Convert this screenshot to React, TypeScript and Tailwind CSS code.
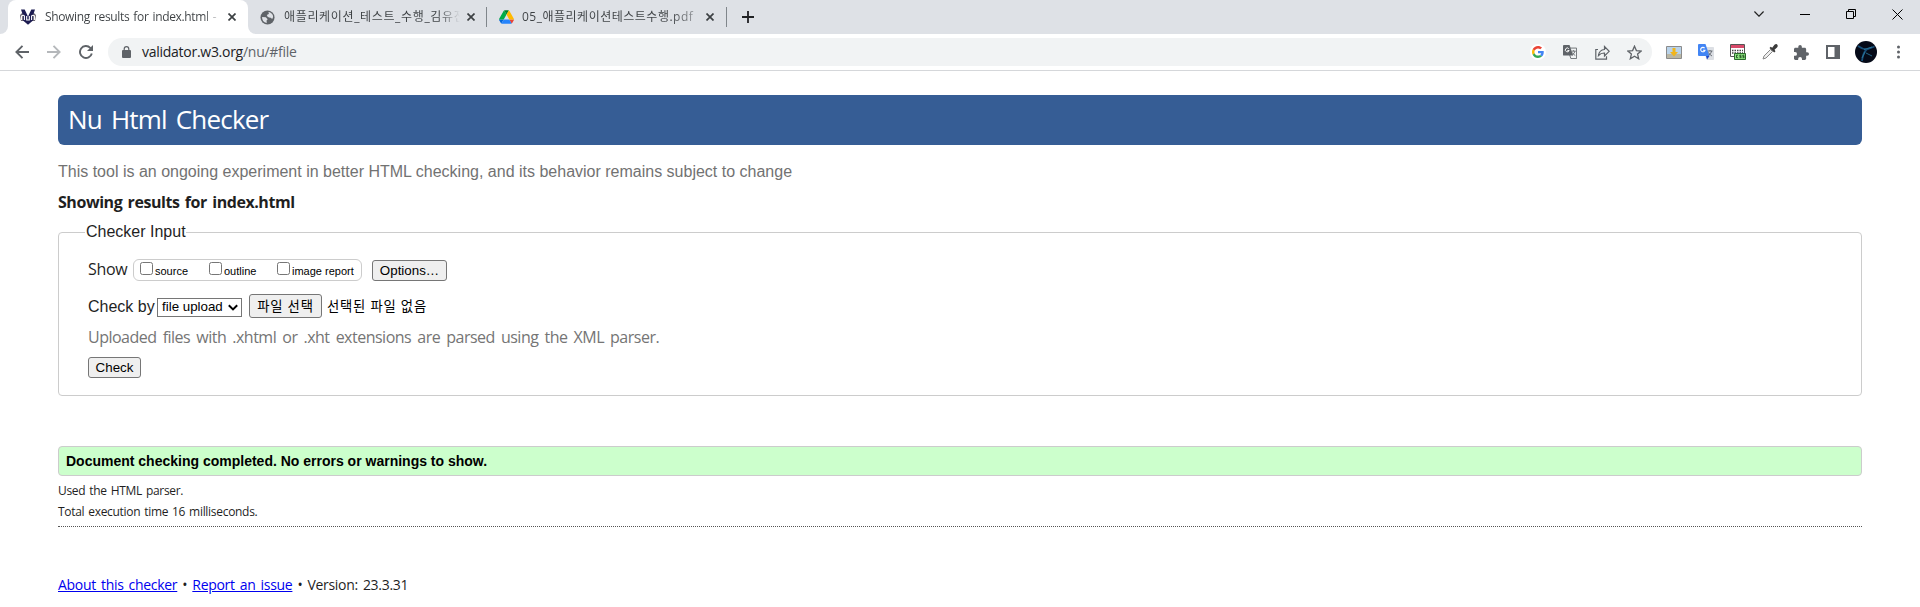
import React from "react";

const ui = "font-['Open_Sans','Noto_Sans_CJK_KR',sans-serif]";
const arial = "font-['Liberation_Sans','Noto_Sans_CJK_KR',sans-serif]";
const btn = "flex items-center justify-center rounded-[3px] border border-[#767676] bg-[#efefef] text-black whitespace-nowrap";

function TabClose() {
  return (
    <svg className="size-2 shrink-0" viewBox="0 0 8 8" fill="none" stroke="#3c4043" strokeWidth="1.7">
      <path d="M.5.5l7 7M7.5.5l-7 7" />
    </svg>
  );
}

function ValidatorIcon() {
  return (
    <svg className="size-4 shrink-0" viewBox="0 0 16 16">
      <path d="M0 6.500Q.5 4 3 4L5 6v6H1zM16 6.500Q15.500 4 13 4L11 6v6h4z" fill="#6b6670" />
      <path d="M1 0.500h3.700L8 7.500l3.300-7H15l-2 6v5L8 15.800l-5-4.300V6.500z" fill="#1d1c52" />
      <path d="M1.600 11V7Q3.500 5.500 4.400 7v4M6.700 7v4h2.600V7M11.600 11V7Q13 5.500 14.400 7v4" fill="none" stroke="#fff" strokeWidth="1.100" />
    </svg>
  );
}

function GlobeIcon() {
  return (
    <svg className="size-[15px] shrink-0" viewBox="0 0 16 16">
      <circle cx="8" cy="8" r="7.500" fill="#5f6368" />
      <path d="M2.200 7.500l4 .3 2 2-1.200 1.300.2 2.700Q2 12.800 2.200 7.500zM9 2.200l1.500.1Q14 4 14 7.500l-1 2-1.600-1.200L9.500 8 7.300 6.500 8 4.800l1.500-.6z" fill="#dee1e6" />
    </svg>
  );
}

function DriveIcon() {
  return (
    <svg className="h-[14px] w-[15px] shrink-0" viewBox="0 0 87.300 78">
      <path d="m6.600 66.850 3.850 6.650c.8 1.400 1.950 2.500 3.300 3.300l13.750-23.800h-27.500c0 1.550.4 3.100 1.200 4.500z" fill="#0066da" />
      <path d="m43.650 25-13.750-23.800c-1.350.8-2.500 1.900-3.300 3.300l-25.400 44a9.060 9.060 0 0 0-1.200 4.500h27.500z" fill="#00ac47" />
      <path d="m73.550 76.800c1.350-.8 2.500-1.900 3.300-3.300l1.600-2.750 7.650-13.250c.8-1.400 1.200-2.950 1.200-4.500h-27.502l5.852 11.500z" fill="#ea4335" />
      <path d="m43.650 25 13.750-23.800c-1.350-.8-2.900-1.200-4.500-1.200h-18.500c-1.600 0-3.150.45-4.500 1.200z" fill="#00832d" />
      <path d="m59.800 53h-32.300l-13.750 23.800c1.350.8 2.900 1.200 4.500 1.200h50.800c1.600 0 3.150-.45 4.500-1.200z" fill="#2684fc" />
      <path d="m73.400 26.500-12.700-22c-.8-1.400-1.950-2.500-3.300-3.300l-13.750 23.800 16.150 28h27.450c0-1.550-.4-3.100-1.200-4.500z" fill="#ffba00" />
    </svg>
  );
}

function TabStrip() {
  return (
    <div className={`${ui} flex h-[34px] bg-[#dee1e6] text-[12px] text-[#3c4043]`}>
      <div className="flex w-2 items-end bg-white">
        <div className="h-full w-full rounded-br-lg bg-[#dee1e6]" />
      </div>
      <div className="w-60 bg-[#dee1e6]">
        <div className="flex h-full items-center rounded-t-lg bg-white pl-3">
          <ValidatorIcon />
          <span className="ml-[9px] w-[176px] whitespace-nowrap bg-linear-to-r from-[#3c4043] from-90% to-transparent bg-clip-text text-[12px] tracking-[-0.35px] [word-spacing:1.3px] text-transparent">
            Showing results for index.html -
          </span>
          <span className="ml-[7px] flex"><TabClose /></span>
        </div>
      </div>
      <div className="w-2 bg-white">
        <div className="h-full w-full rounded-bl-lg bg-[#dee1e6]" />
      </div>
      <div className="flex items-center pl-1">
        <GlobeIcon />
        <span className="ml-[9px] w-[176px] overflow-hidden whitespace-nowrap bg-linear-to-r from-[#3c4043] from-88% to-transparent bg-clip-text tracking-[0.65px] text-transparent">
          애플리케이션_테스트_수행_김유진
        </span>
        <span className="ml-[7px] flex"><TabClose /></span>
        <i className="ml-[11px] h-5 w-px bg-[#80868b]" />
        <span className="ml-3 flex"><DriveIcon /></span>
        <span className="ml-2 w-[174px] whitespace-nowrap bg-linear-to-r from-[#3c4043] from-85% to-[#3c404366] bg-clip-text tracking-[0.5px] text-transparent">
          05_애플리케이션테스트수행.pdf
        </span>
        <span className="ml-[10px] flex"><TabClose /></span>
        <i className="ml-[12px] h-5 w-px bg-[#80868b]" />
        <svg className="ml-[15px] size-3" viewBox="0 0 12 12" stroke="#202124" strokeWidth="1.800">
          <path d="M6 0v12M0 6h12" />
        </svg>
      </div>
      <div className="ml-auto flex h-7 items-center pr-[17px] text-black">
        <svg className="h-[6px] w-[10px]" viewBox="0 0 10 6" fill="none" stroke="#222" strokeWidth="1.200"><path d="M.4.5L5 5.200 9.600.5" /></svg>
        <i className="ml-9 h-px w-[10px] bg-black" />
        <svg className="ml-9 size-[10px]" viewBox="0 0 10 10" fill="none" stroke="#000">
          <path d="M.5 2.500h7v7h-7zM2.500 2.500v-2h7v7h-2" />
        </svg>
        <svg className="ml-9 size-[11px]" viewBox="0 0 11 11" fill="none" stroke="#000"><path d="M.5.5l10 10M10.500.5l-10 10" /></svg>
      </div>
    </div>
  );
}

function GoogleIcon() {
  return (
    <span className="flex size-4 items-center justify-center rounded-full bg-white">
      <svg className="size-3" viewBox="0 0 48 48">
        <path fill="#EA4335" d="M24 9.500c3.540 0 6.710 1.220 9.210 3.600l6.850-6.850C35.900 2.380 30.470 0 24 0 14.620 0 6.510 5.380 2.560 13.220l7.980 6.190C12.430 13.720 17.740 9.500 24 9.500z" />
        <path fill="#4285F4" d="M46.980 24.550c0-1.570-.15-3.090-.38-4.550H24v9.020h12.940c-.58 2.960-2.260 5.480-4.780 7.180l7.730 6c4.510-4.180 7.090-10.360 7.090-17.650z" />
        <path fill="#FBBC05" d="M10.530 28.590c-.48-1.450-.76-2.990-.76-4.590s.27-3.140.76-4.590l-7.980-6.190C.92 16.460 0 20.120 0 24c0 3.880.92 7.540 2.560 10.780l7.970-6.190z" />
        <path fill="#34A853" d="M24 48c6.480 0 11.930-2.130 15.890-5.810l-7.730-6c-2.150 1.450-4.920 2.300-8.160 2.300-6.260 0-11.570-4.220-13.470-9.910l-7.980 6.190C6.510 42.620 14.620 48 24 48z" />
      </svg>
    </span>
  );
}

function TranslateIcon({ blue = false }: { blue?: boolean }) {
  const main = blue ? "#4285f4" : "#5f6368";
  return (
    <svg className={blue ? "size-4" : "size-[14px]"} viewBox="0 0 16 16" fill="none">
      <path d="M5 3.500h10.500v12H9z" fill={blue ? "#dcdfe4" : "#f1f3f4"} stroke={blue ? "#dcdfe4" : main} />
      <path d="M0 1Q0 0 1 0h6.500l4 12H1q-1 0-1-1z" fill={main} />
      {blue && <path d="M8 12h3.500L9 15.500z" fill="#1a46c8" />}
      <path d="M6.600 4.200A2.200 2.200 0 1 0 7 6.300H5" stroke="#fff" strokeWidth="1.100" />
      <path d="M9.800 7h4.700M12 6v1M13.700 7q-.7 3-3.200 4.500M10.500 8.500q1.500 2.500 3.500 3.500" stroke={blue ? "#6b7078" : main} />
    </svg>
  );
}

function Toolbar() {
  return (
    <div className={`${ui} flex h-[37px] items-center border-b border-[#d5d7da] bg-white pl-[15px] pb-0`}>
      <svg className="h-[14px] w-[14px]" viewBox="0 0 14 14" fill="none" stroke="#5f6368" strokeWidth="1.900"><path d="M14 7H1.500M7.500.9L1.400 7l6.100 6.100" /></svg>
      <svg className="ml-[18px] h-[14px] w-[14px]" viewBox="0 0 14 14" fill="none" stroke="#b5b8bb" strokeWidth="1.900"><path d="M0 7h12.500M6.500.9L12.600 7l-6.100 6.100" /></svg>
      <svg className="ml-[18px] size-[14px]" viewBox="0 0 14 14" fill="none" stroke="#5f6368" strokeWidth="1.900">
        <path d="M12.800 8.500A6 6 0 1 1 11.300 2.800L13 4.500" />
        <path d="M14 0v6H8z" fill="#5f6368" stroke="none" />
      </svg>
      <div className="ml-[15px] flex h-7 w-[1544px] items-center rounded-full bg-[#f1f3f4] pl-[14px] text-[14px] leading-7 text-[#202124]">
        <svg className="h-3 w-[9px]" viewBox="0 0 9 12">
          <path d="M1 4h7q1 0 1 1v6q0 1-1 1H1q-1 0-1-1V5q0-1 1-1z" fill="#5f6368" />
          <path d="M2.200 4.500V3a2.300 2.300 0 0 1 4.600 0v1.500" fill="none" stroke="#5f6368" strokeWidth="1.200" />
        </svg>
        <span className="ml-[11px] tracking-[-0.27px]">validator.w3.org<span className="text-[#5f6368]">/nu/#file</span></span>
        <div className="ml-auto flex items-center pr-[10px]">
          <GoogleIcon />
          <span className="ml-[17px]"><TranslateIcon /></span>
          <svg className="ml-[18px] size-[15px]" viewBox="0 0 15 15" fill="none" stroke="#5f6368" strokeWidth="1.200">
            <path d="M3 4.500H.8v9.700h10.700v-3M3.500 10.500Q4.200 5 9.500 4.500V1.500L14.200 6.300 9.500 11V8Q6 7.800 3.500 10.500z" />
          </svg>
          <svg className="ml-[17px] size-[15px]" viewBox="0 0 15 15" fill="none" stroke="#5f6368" strokeWidth="1.300">
            <path d="M7.500 1.200l1.900 4.400 4.800.4-3.600 3.100 1.100 4.700-4.200-2.500-4.200 2.500 1.100-4.700L.8 6l4.800-.4z" />
          </svg>
        </div>
      </div>
      <svg className="ml-[14px] h-[13px] w-4" viewBox="0 0 16 13">
        <path d="M.5.5h15v12H.5z" fill="#b9d3ea" stroke="#8b8b8b" />
        <path d="M1 8h14v4H1z" fill="#b9b7a5" />
        <path d="M6.500 2h3v4H12l-4 4.500L4 6h2.500z" fill="#f1b51c" />
      </svg>
      <span className="ml-4"><TranslateIcon blue /></span>
      <svg className="ml-4 size-4" viewBox="0 0 16 16">
        <path d="M.5.5h14v12H.5z" fill="#fff" stroke="#555" />
        <path d="M1 1h13v3H1z" fill="#d8496a" />
        <path d="M2 6.500h11M2 9h11" stroke="#444" strokeWidth="1.300" strokeDasharray="1.500 1" />
        <path d="M4.500 9.500h11v6h-11z" fill="#8be27e" stroke="#2b6a2b" />
        <path d="M8 11.200H6.500v2.500H8M11.300 11.200H9.800v1.200h1.300v1.300H9.500M14.300 11.200h-1.500v1.200h1.300v1.300h-1.500" fill="none" stroke="#173c17" strokeWidth=".8" />
      </svg>
      <svg className="ml-4 size-4" viewBox="0 0 16 16">
        <path d="M1 15l1-3 6.500-6.500 2 2L4 14z" fill="#eee" stroke="#888" />
        <path d="M7.500 4l1.200-1.200 1.500 1L12.500.8q2-1.500 3 .2.600 1.300-.5 2.500l-2.500 2.300 1 1.500L12.200 8.500z" fill="#3b3b3b" />
      </svg>
      <svg className="ml-4 size-[15px]" viewBox="2 1 21 21" fill="#5f6368">
        <path d="M20.500 11H19V7c0-1.100-.9-2-2-2h-4V3.500a2.500 2.500 0 0 0-5 0V5H4c-1.100 0-2 .9-2 2v3.800h1.500a2.700 2.700 0 0 1 0 5.400H2V20c0 1.100.9 2 2 2h3.800v-1.500a2.700 2.700 0 0 1 5.400 0V22H17c1.100 0 2-.9 2-2v-4h1.500a2.500 2.500 0 0 0 0-5z" />
      </svg>
      <svg className="ml-[17px] h-[14px] w-[14px]" viewBox="0 0 14 14">
        <path d="M1 1h12v12H1z" fill="#fff" stroke="#5f6368" strokeWidth="2" /><path d="M8.500 0H14v14H8.500z" fill="#5f6368" />
      </svg>
      <svg className="ml-[15px] size-[22px]" viewBox="0 0 22 22">
        <circle cx="11" cy="11" r="11" fill="#050a18" />
        <path d="M3 5q4 3 8.500 3.500l8-3M11.500 8.500Q8 12 7 20" fill="none" stroke="#174e78" strokeWidth="1.800" />
        <path d="M9 8.500l8-2.500M7 17l3-6M11 12l6 3" fill="none" stroke="#2f7fa3" strokeWidth=".8" />
      </svg>
      <svg className="ml-5 h-[14px] w-[3px]" viewBox="0 0 3 14" fill="#5f6368">
        <circle cx="1.500" cy="2" r="1.500" /><circle cx="1.500" cy="7" r="1.500" /><circle cx="1.500" cy="12" r="1.500" />
      </svg>
    </div>
  );
}

function Option({ label, width }: { label: string; width: string }) {
  return (
    <label className={`flex ${width}`}>
      <i className="size-[13px] shrink-0 rounded-[2.500px] border border-[#767676] bg-white" />
      <span className="ml-[2px] mt-[3px] whitespace-nowrap leading-[13px]">{label}</span>
    </label>
  );
}

export default function App() {
  return (
    <div className="h-[607px] overflow-hidden bg-white text-[#1f1f1f]">
      <TabStrip />
      <Toolbar />
      <main className={`${ui} ml-[58px] w-[1804px] pt-6`}>
        <h1 className="flex h-[50px] items-center rounded-md bg-[#365d95] pb-[2px] pl-[10px] text-[26px] font-normal tracking-[-0.8px] text-white [word-spacing:3px]">Nu Html Checker</h1>
        <p className={`${arial} mt-[17px] text-[16px] leading-5 text-[#727272]`}>
          This tool is an ongoing experiment in better HTML checking, and its behavior remains subject to change
        </p>
        <h2 className="mt-[10px] h-5 text-[16px] font-bold leading-5 tracking-[-0.45px] [word-spacing:1.7px]">Showing results for index.html</h2>
        <section className="mt-5 h-[164px] rounded border border-[#ccc] px-[29px]">
          <div className={`${arial} -ml-[3px] -mt-[11px] flex h-5 w-[101px] whitespace-nowrap bg-white pl-px text-[16px] leading-5`}>Checker Input</div>
          <div className="mt-[17px] flex h-[22px] text-[16px] leading-[22px]">
            <span className="-mt-px w-[45px] tracking-[-0.3px]">Show</span>
            <div className={`${arial} mt-0 flex w-[229px] rounded-md border border-[#ccc] pl-[6px] pt-[2px] text-[11px] text-black`}>
              <Option label="source" width="w-[69px]" />
              <Option label="outline" width="w-[68px]" />
              <Option label="image report" width="w-20" />
            </div>
            <button className={`${btn} ${arial} ml-[10px] mt-px h-[21px] w-[75px] text-[13.330px]`}>Options…</button>
          </div>
          <div className="mt-[13px] flex h-6 items-center text-black">
            <span className={`${arial} w-[69px] pt-px text-[16px] text-[#1f1f1f]`}>Check by</span>
            <div className={`${arial} mt-[2px] flex h-[19px] w-[85px] items-center whitespace-nowrap border border-[#767676] pl-1 text-[13.330px]`}>
              file upload
              <svg className="ml-[5px] h-[7px] w-[10px]" viewBox="0 0 10 7" fill="none" stroke="#000" strokeWidth="2"><path d="M.8 1.200L5 5.400l4.200-4.200" /></svg>
            </div>
            <button className={`${btn} ml-[7px] h-6 w-[73px] pt-px text-[13.330px] tracking-[0.8px]`}>파일 선택</button>
            <span className="ml-[5px] pt-px text-[13.330px] tracking-[0.8px]">선택된 파일 없음</span>
          </div>
          <p className="mt-[9px] h-5 text-[16px] leading-5 tracking-[-0.5px] text-[#757575] [word-spacing:2.4px]">Uploaded files with .xhtml or .xht extensions are parsed using the XML parser.</p>
          <button className={`${btn} ${arial} mt-[10px] h-[21px] w-[53px] text-[13.330px]`}>Check</button>
        </section>
        <p className={`${arial} mt-[50px] flex h-[30px] items-center rounded border border-[#ccc] bg-[#ccffcc] pl-[7px] text-[14px] font-bold text-black`}>
          Document checking completed. No errors or warnings to show.
        </p>
        <p className="mt-[5px] h-5 text-[12px] leading-5 tracking-[-0.3px] [word-spacing:1.1px]">Used the HTML parser.</p>
        <p className="mt-px h-5 text-[12px] leading-5 tracking-[-0.3px] [word-spacing:1.1px]">Total execution time 16 milliseconds.</p>
        <div className="mt-[4px] border-t border-dotted border-[#555]" />
        <footer className="mt-[48px] flex h-5 whitespace-pre text-[14px] leading-5 tracking-[-0.3px] [word-spacing:1.7px]">
          <a className="text-[#0000ee] underline">About this checker</a>
          <span> • </span>
          <a className="text-[#0000ee] underline">Report an issue</a>
          <span> • Version: 23.3.31</span>
        </footer>
      </main>
    </div>
  );
}
